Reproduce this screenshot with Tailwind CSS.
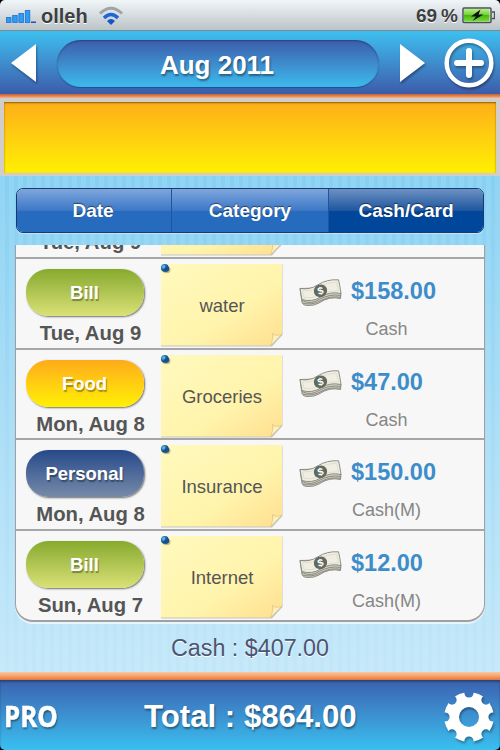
<!DOCTYPE html>
<html lang="en">
<head>
  <meta charset="UTF-8" />
  <meta name="viewport" content="width=device-width, initial-scale=1.0" />
  <title>Expenses - Aug 2011</title>
  <script src="https://cdn.jsdelivr.net/npm/@tailwindcss/browser@4"></script>
</head>
<body class="bg-black font-['Liberation_Sans',Arial,sans-serif]">

  <!-- shared icons -->
  <svg class="absolute w-0 h-0">
    <defs>
      <linearGradient id="paper" x1="0" y1="0" x2="1" y2="1">
        <stop offset="0" stop-color="#fff9bd" />
        <stop offset="0.6" stop-color="#fff4ac" />
        <stop offset="1" stop-color="#ffdf8e" />
      </linearGradient>
      <linearGradient id="curl" x1="0" y1="0" x2="1" y2="1">
        <stop offset="0" stop-color="#f3cf86" />
        <stop offset="0.4" stop-color="#fff3c4" />
        <stop offset="1" stop-color="#e6c583" />
      </linearGradient>
      <radialGradient id="pin" cx="0.35" cy="0.35" r="0.7">
        <stop offset="0" stop-color="#58b4e6" />
        <stop offset="0.5" stop-color="#1d6bb5" />
        <stop offset="1" stop-color="#123a72" />
      </radialGradient>
      <symbol id="note" viewBox="0 0 124 85">
        <path d="M1 1.500H122.500V72L112 83.500H1Z" fill="#000" opacity="0.2" />
        <path d="M1 1H122V71L111 82.500H1Z" fill="url(#paper)" />
        <path d="M122 71Q117 74 112.500 70.500Q113.500 77 110.500 82.500Z" fill="url(#curl)" stroke="#d6b678" stroke-width="0.500" />
        <ellipse cx="6.500" cy="6.800" rx="4" ry="3.500" fill="#000" opacity="0.250" />
        <circle cx="4.800" cy="4.800" r="3.900" fill="url(#pin)" />
        <circle cx="6.400" cy="6" r="2.800" fill="#17508f" />
        <circle cx="3.800" cy="3.900" r="1.600" fill="#62bbe8" opacity="0.800" />
      </symbol>
      <symbol id="cash" viewBox="0 0 44 30">
        <g stroke="#85857c" stroke-width="0.900" stroke-linejoin="round">
          <path d="M1 10.500L3 24.500Q4 27.500 8 27.500Q15 28 20 25Q30 18 41.500 20.500L42 15L20 10Z" fill="#d0cec0" />
          <path d="M3 22.500Q12 27 20 21.500Q31 15.500 42 17.500M3.500 25Q13 27.500 21 23Q31 17.500 42 19.300" fill="none" />
          <path d="M1 10.500Q11 12 18.500 7Q28 1 39.500 1.800Q41 8 42 15.500Q31 13 21.500 19Q13 24.500 3 21.500Z" fill="#f0eee2" />
          <path d="M3.500 13Q12 14 20 9Q28 4 37.500 4.200L39.500 12.800Q29 12 20 17Q13 21 5 19.500Z" fill="none" stroke="#d6d3c6" stroke-width="0.600" />
        </g>
        <ellipse cx="21.500" cy="12.800" rx="6.800" ry="6.300" transform="rotate(-25 21.500 12.800)" fill="#606b60" />
        <text x="21.500" y="16.500" text-anchor="middle" font-family="Liberation Sans" font-weight="bold" font-size="10.500" fill="#fff" transform="rotate(-14 21.500 12.800)">$</text>
      </symbol>
    </defs>
  </svg>

  <div class="w-[500px] h-[750px] flex flex-col overflow-hidden">

    <!-- status bar -->
    <div class="h-[31px] shrink-0 flex items-center rounded-t-[5px] bg-linear-to-b from-[#f1f6f8] to-[#bcc4c8] border-b border-[#7d8a90] pl-1.5 pr-[5px] text-[#3d3f42] font-bold">
      <svg class="w-[30px] h-[15px] mt-[3px]" viewBox="0 0 30 15">
        <g fill="#2e9cf5" stroke="#1b6fd0" stroke-width="0.800">
          <rect x="0.500" y="8.500" width="4.500" height="5" />
          <rect x="6.700" y="6.500" width="4.500" height="7" />
          <rect x="12.900" y="4.500" width="4.500" height="9" />
          <rect x="19.300" y="1.500" width="4.500" height="12" />
        </g>
        <rect x="25" y="12.500" width="5" height="1.500" fill="#2456a8" />
      </svg>
      <span class="ml-[5px] mt-px text-[20px] leading-none text-shadow-[0_1px_0_#fff]">olleh</span>
      <svg class="w-[26px] h-[20px] ml-[10px] mt-px" viewBox="0 0 26 20">
        <path d="M2 7.500Q13 -3 24 7.500" fill="none" stroke="#a0a3a5" stroke-width="3" />
        <path d="M6 12Q13 5 20 12" fill="none" stroke="#1f65d6" stroke-width="3.500" />
        <path d="M9 15Q13 11 17 15L13 19Z" fill="#1554c4" />
      </svg>
      <span class="ml-auto text-[19px] leading-none text-shadow-[0_1px_0_#fff]">69</span>
      <span class="ml-[4px] text-[19px] leading-none text-shadow-[0_1px_0_#fff]">%</span>
      <svg class="w-[33px] h-[17px] ml-[4px]" viewBox="0 0 33 17">
        <defs>
          <linearGradient id="batt" x1="0" y1="0" x2="0" y2="1">
            <stop offset="0" stop-color="#b5ef85" />
            <stop offset="0.450" stop-color="#76d23c" />
            <stop offset="0.500" stop-color="#45b60f" />
            <stop offset="1" stop-color="#79dc36" />
          </linearGradient>
        </defs>
        <rect x="1" y="1" width="28" height="14.500" rx="1" fill="#e8eef0" stroke="#4c5154" stroke-width="1.500" />
        <rect x="2" y="2" width="25.500" height="12.500" fill="url(#batt)" />
        <path d="M30 5H32.500V11.500H30" fill="#d5dadd" stroke="#4c5154" stroke-width="1.300" />
        <path d="M18.500 2.500L9 9.500H14L10.500 14L21.500 7.500H16.500Z" fill="#111" />
      </svg>
    </div>

    <!-- month header -->
    <header class="h-[63px] shrink-0 flex items-center bg-linear-to-b from-[#3cc0f0] to-[#3b5cab] pl-[11px] pr-[6px]">
      <svg class="w-[26px] h-[40px] drop-shadow-[1px_2px_1px_rgba(0,0,0,0.35)]" viewBox="0 0 26 40"><path d="M0 20L25 1V39Z" fill="#fff" /></svg>
      <div class="ml-[20px] mt-px w-[322px] h-[47px] rounded-full bg-linear-to-b from-[#3b5dac] to-[#3bbbec] shadow-[inset_0_1px_2px_rgba(0,0,0,0.3),0_1px_1px_rgba(20,60,120,0.6)] flex items-center justify-center">
        <h1 class="text-white text-[26px] leading-none font-bold mt-[3px] -ml-0.5 text-shadow-[1px_2px_2px_rgba(0,0,0,0.4)]">Aug 2011</h1>
      </div>
      <svg class="ml-[20px] w-[26px] h-[40px] drop-shadow-[1px_2px_1px_rgba(0,0,0,0.35)]" viewBox="0 0 26 40"><path d="M26 20L1 1V39Z" fill="#fff" /></svg>
      <svg class="ml-auto w-[50px] h-[50px] drop-shadow-[1px_2px_1px_rgba(0,0,0,0.35)]" viewBox="0 0 50 50">
        <circle cx="25" cy="25" r="22.300" fill="none" stroke="#fff" stroke-width="4.500" />
        <path d="M25 13V37M13 25H37" stroke="#fff" stroke-width="6" stroke-linecap="round" />
      </svg>
    </header>
    <div class="h-1 shrink-0 bg-linear-to-b from-[#b9653f] via-[#e8813f] to-[#f0b493]"></div>

    <!-- ad banner -->
    <div class="h-[78px] shrink-0 bg-[#d2cdc8] p-1">
      <div class="h-[71px] bg-linear-to-b from-[#fdae17] to-[#fff000] shadow-[inset_0_1px_2px_rgba(90,60,0,0.7)]"></div>
    </div>

    <!-- list -->
    <main class="h-[496px] shrink-0 bg-linear-to-b from-[#86d0f2] to-[#c2e7f9]">
      <div class="h-full px-[15px] pt-3 bg-[repeating-linear-gradient(90deg,rgba(255,255,255,0.09)_0px,rgba(255,255,255,0.09)_5px,transparent_5px,transparent_9px)]">

        <div class="mx-px h-[45px] grid grid-cols-[155px_157px_1fr] rounded-[7px] overflow-hidden border border-[#173a70] text-white text-[19px] font-bold text-center leading-[43px] text-shadow-[0_-1px_1px_rgba(0,0,0,0.5)] shadow-[0_1px_0_rgba(255,255,255,0.4)]">
          <div class="bg-[linear-gradient(#7ea6dc,#3d78c6_50%,#266bbe_51%,#266bbe)] border-r border-[#1f559f] pr-0.5">Date</div>
          <div class="bg-[linear-gradient(#7ea6dc,#3d78c6_50%,#266bbe_51%,#266bbe)] border-r border-[#1f559f]">Category</div>
          <div class="bg-[linear-gradient(#6c91c2,#1f569f_50%,#00469a_51%,#00469a)]">Cash/Card</div>
        </div>

        <div class="mt-3 h-[377px] pb-px overflow-hidden flex flex-col justify-end rounded-b-[18px] border-x-[1.5px] border-b-2 border-[#a0a0a0] bg-[#f7f7f7] shadow-[0_2px_0_rgba(255,255,255,0.6)] text-[#555]">

          <!-- scrolled-off row -->
          <div class="h-[90.5px] shrink-0 flex">
            <div class="w-[144px] shrink-0 pt-[11px] pl-[10px]">
              <div class="w-[118px] h-[47px]"></div>
              <div class="mt-[7px] w-[129px] text-center text-[20.3px] leading-[20px] font-bold whitespace-nowrap">Tue, Aug 9</div>
            </div>
            <svg class="w-[124px] h-[85px] mt-[5px] shrink-0"><use href="#note" /></svg>
          </div>

          <div class="h-[90.5px] shrink-0 flex border-t-2 border-[#a6a6a6]">
            <div class="w-[144px] shrink-0 pt-[10px] pl-[10px]">
              <div class="w-[118px] h-[47px] rounded-[22px] bg-linear-to-b from-[#86aa2c] to-[#dbe176] shadow-[1px_1px_2px_rgba(0,0,0,0.55)] text-white text-[18.5px] leading-[47px] font-bold text-center pr-px text-shadow-[1px_2px_1px_rgba(0,0,0,0.35)]">Bill</div>
              <div class="mt-[7px] w-[129px] text-center text-[20.3px] leading-[20px] font-bold whitespace-nowrap">Tue, Aug 9</div>
            </div>
            <div class="grid w-[124px] h-[85px] mt-[4px] shrink-0">
              <svg class="col-start-1 row-start-1 w-[124px] h-[85px]"><use href="#note" /></svg>
              <div class="col-start-1 row-start-1 text-center text-[18.5px] leading-[85px]">water</div>
            </div>
            <svg class="ml-[15px] mt-[19px] w-[44px] h-[30px] shrink-0"><use href="#cash" /></svg>
            <div class="ml-[8px] mt-[20px] w-[71px]">
              <div class="text-[23.5px] leading-[24px] font-bold text-[#3e8dcb]">$158.00</div>
              <div class="mt-[16px] text-[18px] leading-[20px] text-center text-[#868686]">Cash</div>
            </div>
          </div>

          <div class="h-[90.5px] shrink-0 flex border-t-2 border-[#a6a6a6]">
            <div class="w-[144px] shrink-0 pt-[10px] pl-[10px]">
              <div class="w-[118px] h-[47px] rounded-[22px] bg-linear-to-b from-[#fdab19] to-[#fff000] shadow-[1px_1px_2px_rgba(0,0,0,0.55)] text-white text-[18.5px] leading-[47px] font-bold text-center pr-px text-shadow-[1px_2px_1px_rgba(0,0,0,0.35)]">Food</div>
              <div class="mt-[7px] w-[129px] text-center text-[20.3px] leading-[20px] font-bold whitespace-nowrap">Mon, Aug 8</div>
            </div>
            <div class="grid w-[124px] h-[85px] mt-[4px] shrink-0">
              <svg class="col-start-1 row-start-1 w-[124px] h-[85px]"><use href="#note" /></svg>
              <div class="col-start-1 row-start-1 text-center text-[18.5px] leading-[85px]">Groceries</div>
            </div>
            <svg class="ml-[15px] mt-[19px] w-[44px] h-[30px] shrink-0"><use href="#cash" /></svg>
            <div class="ml-[8px] mt-[20px] w-[71px]">
              <div class="text-[23.5px] leading-[24px] font-bold text-[#3e8dcb]">$47.00</div>
              <div class="mt-[16px] text-[18px] leading-[20px] text-center text-[#868686]">Cash</div>
            </div>
          </div>

          <div class="h-[90.5px] shrink-0 flex border-t-2 border-[#a6a6a6]">
            <div class="w-[144px] shrink-0 pt-[10px] pl-[10px]">
              <div class="w-[118px] h-[47px] rounded-[22px] bg-linear-to-b from-[#27498a] to-[#778ba8] shadow-[1px_1px_2px_rgba(0,0,0,0.55)] text-white text-[18.5px] leading-[47px] font-bold text-center pr-px text-shadow-[1px_2px_1px_rgba(0,0,0,0.35)]">Personal</div>
              <div class="mt-[7px] w-[129px] text-center text-[20.3px] leading-[20px] font-bold whitespace-nowrap">Mon, Aug 8</div>
            </div>
            <div class="grid w-[124px] h-[85px] mt-[4px] shrink-0">
              <svg class="col-start-1 row-start-1 w-[124px] h-[85px]"><use href="#note" /></svg>
              <div class="col-start-1 row-start-1 text-center text-[18.5px] leading-[85px]">Insurance</div>
            </div>
            <svg class="ml-[15px] mt-[19px] w-[44px] h-[30px] shrink-0"><use href="#cash" /></svg>
            <div class="ml-[8px] mt-[20px] w-[71px]">
              <div class="text-[23.5px] leading-[24px] font-bold text-[#3e8dcb]">$150.00</div>
              <div class="mt-[16px] text-[18px] leading-[20px] text-center text-[#868686]">Cash(M)</div>
            </div>
          </div>

          <div class="h-[90.5px] shrink-0 flex border-t-2 border-[#a6a6a6]">
            <div class="w-[144px] shrink-0 pt-[10px] pl-[10px]">
              <div class="w-[118px] h-[47px] rounded-[22px] bg-linear-to-b from-[#86aa2c] to-[#dbe176] shadow-[1px_1px_2px_rgba(0,0,0,0.55)] text-white text-[18.5px] leading-[47px] font-bold text-center pr-px text-shadow-[1px_2px_1px_rgba(0,0,0,0.35)]">Bill</div>
              <div class="mt-[7px] w-[129px] text-center text-[20.3px] leading-[20px] font-bold whitespace-nowrap">Sun, Aug 7</div>
            </div>
            <div class="grid w-[124px] h-[85px] mt-[4px] shrink-0">
              <svg class="col-start-1 row-start-1 w-[124px] h-[85px]"><use href="#note" /></svg>
              <div class="col-start-1 row-start-1 text-center text-[18.5px] leading-[85px]">Internet</div>
            </div>
            <svg class="ml-[15px] mt-[19px] w-[44px] h-[30px] shrink-0"><use href="#cash" /></svg>
            <div class="ml-[8px] mt-[20px] w-[71px]">
              <div class="text-[23.5px] leading-[24px] font-bold text-[#3e8dcb]">$12.00</div>
              <div class="mt-[16px] text-[18px] leading-[20px] text-center text-[#868686]">Cash(M)</div>
            </div>
          </div>
        </div>

        <div class="mt-3 text-center text-[23.3px] leading-[28px] text-[#4c5573] text-shadow-[0_1px_0_#fff]">Cash : $407.00</div>
      </div>
    </main>

    <!-- totals bar -->
    <div class="h-2 shrink-0 bg-linear-to-b from-[#fbc79e] via-[#f7a26e] to-[#e57637]"></div>
    <footer class="h-[70px] shrink-0 flex items-center rounded-b-[5px] bg-linear-to-b from-[#3a62b0] to-[#38c0f0] shadow-[inset_0_2px_2px_rgba(0,0,0,0.3)] pl-1 pr-[6px] text-white">
      <span class="w-[140px] mt-px origin-left scale-x-[0.89] font-['Open_Sans',sans-serif] font-bold text-[29px] leading-none [-webkit-text-stroke:0.5px_white] text-shadow-[1px_2px_2px_rgba(0,0,0,0.4)]">PRO</span>
      <span class="text-[31.200px] leading-none font-bold mt-[3px] whitespace-nowrap text-shadow-[1px_2px_2px_rgba(0,0,0,0.4)]">Total : $864.00</span>
      <svg class="ml-auto mt-[4px] w-[50px] h-[50px] drop-shadow-[1px_2px_1px_rgba(0,0,0,0.35)]" viewBox="-25 -25 50 50">
        <defs>
          <mask id="gearcut">
            <rect x="-25" y="-25" width="50" height="50" fill="#fff" />
            <g fill="#000">
              <circle r="10" />
              <circle cy="-24" r="4.600" />
              <circle cy="-24" r="4.600" transform="rotate(45)" />
              <circle cy="-24" r="4.600" transform="rotate(90)" />
              <circle cy="-24" r="4.600" transform="rotate(135)" />
              <circle cy="-24" r="4.600" transform="rotate(180)" />
              <circle cy="-24" r="4.600" transform="rotate(225)" />
              <circle cy="-24" r="4.600" transform="rotate(270)" />
              <circle cy="-24" r="4.600" transform="rotate(315)" />
            </g>
          </mask>
        </defs>
        <circle r="24.800" fill="#fff" mask="url(#gearcut)" />
      </svg>
    </footer>
  </div>

</body>
</html>
